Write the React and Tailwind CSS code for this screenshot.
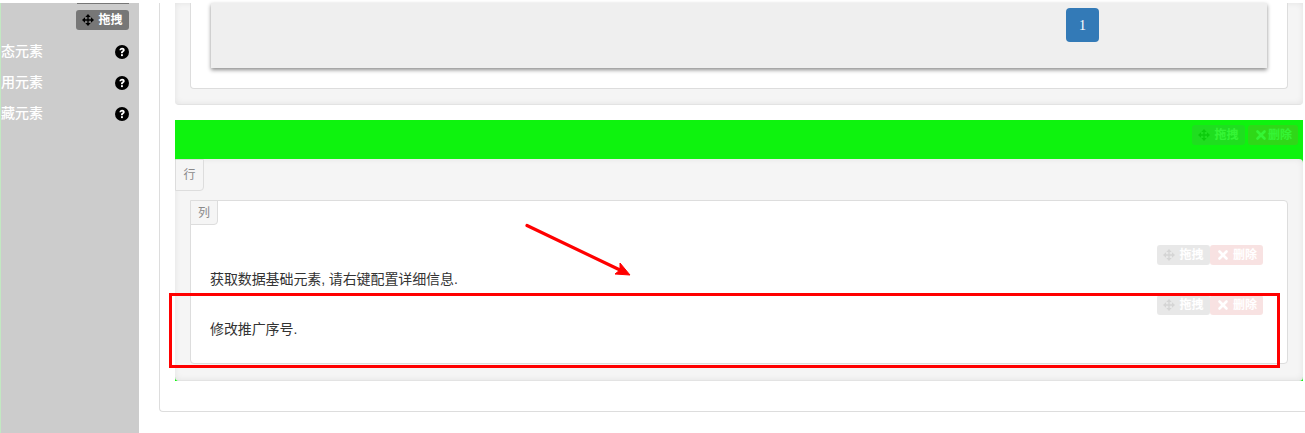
import { X } from 'lucide-react'

const FONT = "font-['Liberation_Sans','Noto_Sans_CJK_SC',sans-serif]"

function MoveIcon({ className }) {
  return (
    <svg viewBox="0 0 16 16" className={className} fill="currentColor">
      <path d="M8 0 11.6 4H8.9V7.1H12V4.4L16 8l-4 3.6V8.9H8.9V12h2.7L8 16l-3.6-4h2.7V8.9H4v2.7L0 8l4-3.6v2.7h3.1V4H4.4z" />
    </svg>
  )
}

function HelpIcon() {
  return (
    <svg viewBox="0 0 14 14" className="w-[14px] h-[14px] -mt-[2px]">
      <circle cx="7" cy="7" r="7" fill="#000" />
      <path d="M4.4 5.3C4.5 3.8 5.6 2.8 7.1 2.8c1.5 0 2.6.9 2.6 2.2 0 1-.6 1.5-1.2 1.9-.5.3-.7.5-.7 1v.4H6v-.6c0-.9.4-1.3 1-1.7.5-.3.8-.5.8-.9 0-.4-.3-.7-.8-.7-.5 0-.9.3-.9.9z" fill="#fff" />
      <rect x="6" y="9.2" width="1.9" height="1.9" fill="#fff" />
    </svg>
  )
}

function SideItem({ label }) {
  return (
    <div className="h-[31px] flex items-center justify-between pr-[10px] text-[14px] font-medium text-white">
      <span className="whitespace-nowrap -mt-[2px]">{label}</span>
      <HelpIcon />
    </div>
  )
}

function RowTools() {
  return (
    <div className="flex justify-end pr-[24px] opacity-[0.16] text-white text-[12px] font-bold">
      <div className="h-[20px] w-[53px] flex items-center justify-center gap-[4px] rounded-[3px] bg-[#777]">
        <MoveIcon className="w-[12px] h-[12px] text-black" />
        拖拽
      </div>
      <div className="h-[20px] w-[53px] flex items-center justify-center gap-[3px] rounded-[3px] bg-[#d9534f]">
        <X size={14} strokeWidth={4.5} />
        删除
      </div>
    </div>
  )
}

export default function App() {
  return (
    <div className={`${FONT} relative w-[1305px] h-[433px] overflow-hidden bg-white text-[14px] text-[#333] flex`}>
      {/* sidebar */}
      <aside className="w-[139px] h-[430px] mt-[3px] shrink-0 bg-[#ccc] border-l border-[#c2e8c2] relative">
        <div className="flex justify-end pr-[10px]">
          <div className="w-[52px] h-[1px] bg-[#777]" />
        </div>
        <div className="flex justify-end pr-[10px] pt-[6px] pb-[7px]">
          <div className="h-[20px] w-[53px] flex items-center justify-center gap-[4px] rounded-[3px] bg-[#777] text-white text-[12px] font-bold">
            <MoveIcon className="w-[12px] h-[12px] text-black" />
            拖拽
          </div>
        </div>
        <SideItem label="态元素" />
        <SideItem label="用元素" />
        <SideItem label="藏元素" />
      </aside>

      {/* main */}
      <main className="flex-1 pl-[20px] pt-[3px]">
        <div className="h-[409px] border-l border-b border-[#ddd] rounded-bl-[4px] pl-[15px] pr-[2px]">
          {/* first row, cut off by the top of the window */}
          <div className="h-[102px] bg-[#f5f5f5] border-b border-[#e3e3e3] rounded-b-[4px] px-[15px] shadow-[inset_0_0_6px_rgba(0,0,0,0.08)]">
            <div className="h-[86px] bg-white border-x border-b border-[#ddd] rounded-b-[4px] px-[20px]">
              <div className="h-[65px] bg-[#efefef] shadow-[0_2px_4px_rgba(0,0,0,0.45)] flex pl-[855px] pt-[5px]">
                <div className="w-[33px] h-[34px] rounded-[4px] bg-[#337ab7] text-white flex items-center justify-center font-['Liberation_Serif',serif] text-[14px]">
                  1
                </div>
              </div>
            </div>
          </div>

          {/* green row */}
          <div className="mt-[15px] h-[261px] bg-[#0ef30e]">
            <div className="h-[39px] pt-[5px]">
              <div className="flex justify-end pr-[5px] text-white text-[12px] font-bold opacity-[0.16]">
                <div className="h-[20px] w-[53px] flex items-center justify-center gap-[4px] rounded-[3px] bg-[#777] mr-[3px]">
                  <MoveIcon className="w-[12px] h-[12px] text-black" />
                  拖拽
                </div>
                <div className="h-[20px] w-[50px] flex items-center justify-center rounded-[3px] bg-[#d9534f]">
                  <X size={14} strokeWidth={4.5} />
                  删除
                </div>
              </div>
            </div>
            <div className="h-[222px] bg-[#f5f5f5] border-b border-[#e3e3e3] rounded-[4px] shadow-[inset_0_0_6px_rgba(0,0,0,0.08)] px-[15px] relative">
              <div className="absolute left-0 top-0 w-[29px] h-[32px] bg-[#f5f5f5] border border-[#ddd] rounded-br-[4px] text-[12px] text-[#8a8a8a] flex items-center justify-center">
                行
              </div>
              <div className="pt-[41px]">
                <div className="h-[164px] bg-white border border-[#ddd] rounded-[4px] relative">
                  <div className="absolute -left-px -top-px w-[28px] h-[25px] bg-[#f5f5f5] border border-[#ddd] rounded-br-[4px] text-[12px] text-[#8a8a8a] flex items-center justify-center">
                    列
                  </div>
                  <div className="pt-[44px]">
                    <RowTools />
                  </div>
                  <div className="pl-[19px] mt-[4px] h-[20px] leading-[20px] tracking-[-0.1px]">获取数据基础元素, 请右键配置详细信息.</div>
                  <div className="mt-[6px]">
                    <RowTools />
                  </div>
                  <div className="pl-[19px] mt-[4px] h-[20px] leading-[20px] tracking-[-0.1px]">修改推广序号.</div>
                </div>
              </div>
            </div>
          </div>
        </div>
      </main>

      {/* screenshot annotations */}
      <div className="absolute left-[169px] top-[293px] w-[1111px] h-[75px] border-[3px] border-[#f00]" />
      <svg className="absolute left-[520px] top-[220px]" width="115" height="60" viewBox="0 0 115 60">
        <path d="M7 5.5 100 50" stroke="#f00" strokeWidth="3.2" strokeLinecap="round" fill="none" />
        <path d="M110 55 95 54 100 50 100 43z" fill="#f00" stroke="#f00" strokeWidth="1" />
      </svg>
    </div>
  )
}
